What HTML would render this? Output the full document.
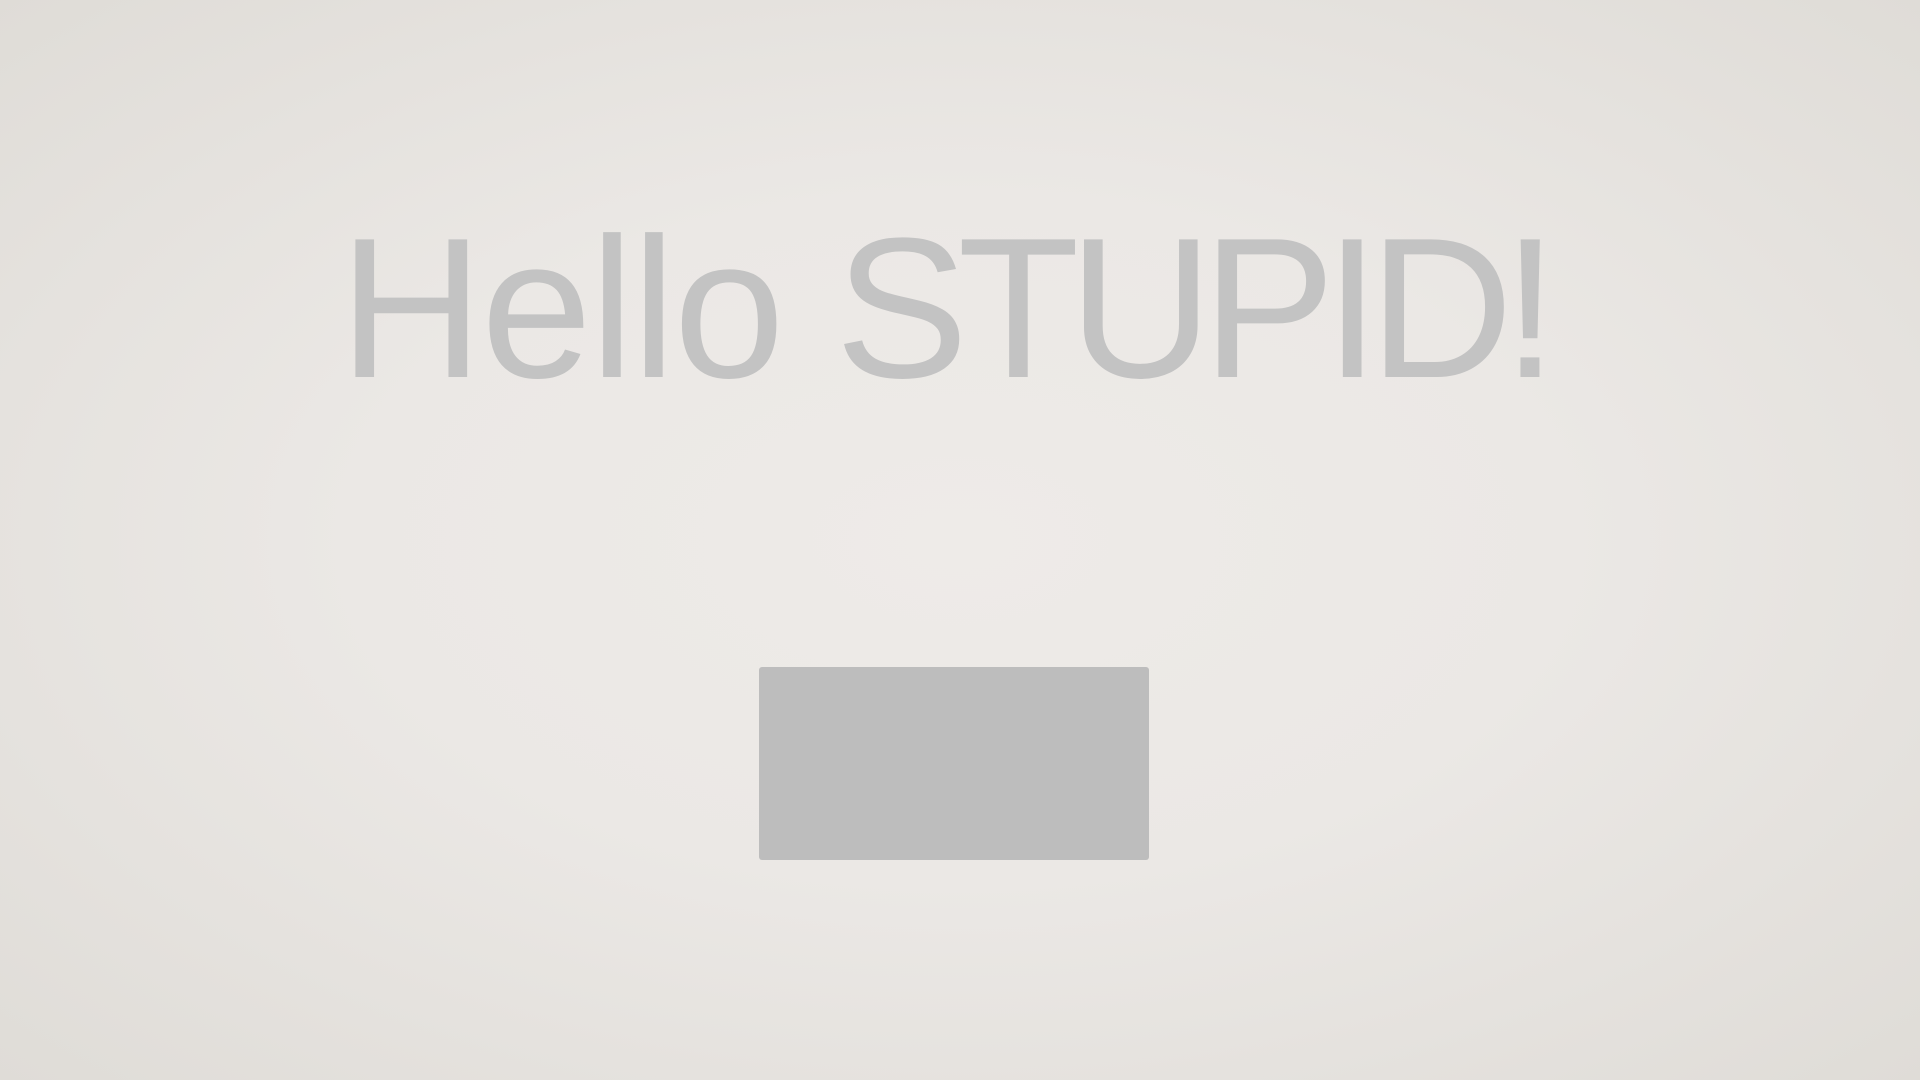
<!DOCTYPE html>
<html><head><meta charset="utf-8"><style>
html,body{margin:0;padding:0;width:1920px;height:1080px;overflow:hidden}
body{background:radial-gradient(ellipse at 50% 50%,#eeebe8 0%,#ebe8e5 45%,#dfdcd7 100%);position:relative;font-family:"Liberation Sans",sans-serif}
.t{position:absolute;top:0;height:378px;line-height:1;font-size:200px;color:#c3c3c3;white-space:nowrap;display:flex;align-items:flex-end}
.t span{display:block;transform:translateY(31px)}
.h{left:339px;letter-spacing:-2.5px}
.s{left:835px;letter-spacing:-11px}
.b{position:absolute;left:759px;top:667px;width:390px;height:193px;background:#bdbdbd;border-radius:3px}
</style></head><body>
<div class="t h"><span>Hello</span></div>
<div class="t s"><span>STUPID!</span></div>
<div class="b"></div>
</body></html>
